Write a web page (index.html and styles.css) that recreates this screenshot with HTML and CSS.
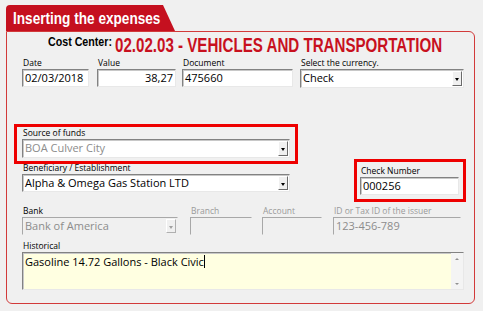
FILE: index.html
```html
<!DOCTYPE html>
<html lang="en">
<head>
    <meta charset="UTF-8">
    <title>Inserting the expenses</title>
    <link rel="stylesheet" href="styles.css">
</head>
<body>
    <div class="frame">
        <div class="tab"><span class="tab-text">Inserting the expenses</span></div>
        <div class="panel">
            <div class="costline">
                <span class="cc-label">Cost Center:</span>
                <span class="cc-value">02.02.03 - VEHICLES AND TRANSPORTATION</span>
            </div>

            <div class="row row-a">
                <div class="field f-date">
                    <label>Date</label>
                    <div class="box">02/03/2018</div>
                </div>
                <div class="field f-value">
                    <label>Value</label>
                    <div class="box right">38,27</div>
                </div>
                <div class="field f-doc">
                    <label>Document</label>
                    <div class="box">475660</div>
                </div>
                <div class="field f-cur">
                    <label>Select the currency.</label>
                    <div class="box combo">Check<span class="drop"></span></div>
                </div>
            </div>

            <div class="row row-b">
                <div class="field f-wide">
                    <label>Source of funds</label>
                    <div class="box combo muted">BOA Culver City<span class="drop"></span></div>
                </div>
            </div>

            <div class="row row-c">
                <div class="field f-wide">
                    <label>Beneficiary / Establishment</label>
                    <div class="box combo">Alpha &amp; Omega Gas Station LTD<span class="drop"></span></div>
                </div>
                <div class="field f-check">
                    <label>Check Number</label>
                    <div class="box">000256</div>
                </div>
            </div>

            <div class="row row-d">
                <div class="field f-bank">
                    <label>Bank</label>
                    <div class="box combo disabled muted">Bank of America<span class="drop off"></span></div>
                </div>
                <div class="field f-branch">
                    <label class="dim">Branch</label>
                    <div class="box disabled"></div>
                </div>
                <div class="field f-account">
                    <label class="dim">Account</label>
                    <div class="box disabled"></div>
                </div>
                <div class="field f-id">
                    <label class="dim">ID or Tax ID of the issuer</label>
                    <div class="box disabled muted">123-456-789</div>
                </div>
            </div>

            <div class="row row-e">
                <div class="field f-hist">
                    <label>Historical</label>
                    <div class="memo">
                        <div class="memo-text">Gasoline 14.72 Gallons - Black Civic<span class="caret"></span></div>
                        <div class="scroll">
                            <span class="arrow up"></span>
                            <span class="arrow down"></span>
                        </div>
                    </div>
                </div>
            </div>

            <div class="mark mark-source"></div>
            <div class="mark mark-check"></div>
        </div>
    </div>
</body>
</html>
```

FILE: styles.css
```css
body {
    margin: 0;
    background: #f0f0f0;
    font-family: 'Open Sans', 'Noto Sans', sans-serif;
    color: #000;
}
.frame {
    padding: 5px 0 0 6px;
}
.tab {
    width: 169px;
    height: 26px;
    box-sizing: border-box;
    padding: 4px 0 0 7px;
    background: #c5101f;
    color: #fff;
    font-family: 'Liberation Sans', Arial, sans-serif;
    font-weight: bold;
    font-size: 17px;
    line-height: 20px;
    white-space: nowrap;
    border-radius: 4px 0 0 0;
    clip-path: polygon(0 0, 157px 0, 169px 100%, 0 100%);
}
.tab-text {
    display: inline-block;
    transform: scaleX(0.8);
    transform-origin: left;
}
.panel {
    position: relative;
    width: 469px;
    height: 273px;
    box-sizing: border-box;
    border: 1px solid #d23a3a;
    border-radius: 0 6px 6px 6px;
    padding: 0 0 0 15px;
}
.costline {
    height: 20px;
    margin-top: 2px;
    padding-left: 26px;
    display: flex;
    align-items: flex-start;
    font-family: 'Liberation Sans', Arial, sans-serif;
    white-space: nowrap;
}
.cc-label {
    display: inline-block;
    font-size: 13px;
    font-weight: bold;
    line-height: 15px;
    transform: scaleX(0.82);
    transform-origin: left;
    margin-right: -11px;
}
.cc-value {
    display: inline-block;
    font-size: 19.5px;
    font-weight: bold;
    line-height: 22px;
    color: #c8101e;
    transform: scaleX(0.775);
    transform-origin: left;
}
.row {
    display: flex;
    align-items: flex-start;
}
.field label {
    display: block;
    font-size: 8.5px;
    line-height: 12px;
    height: 12px;
    padding-left: 1px;
    white-space: nowrap;
}
.field label.dim {
    color: #9a9a9a;
}
.box {
    position: relative;
    height: 18px;
    box-sizing: border-box;
    background: #fff;
    border: 1px solid;
    border-color: #828282 #e8e8e8 #e8e8e8 #828282;
    box-shadow: inset 1px 1px 0 #c8c8c8;
    font-size: 11px;
    line-height: 16px;
    padding: 0 2px;
    white-space: nowrap;
    overflow: hidden;
}
.box.right {
    text-align: right;
}
.box.muted {
    color: #8c8c8c;
}
.box.disabled {
    background: #f0f0f0;
    border-color: #a8a8a8 #f0f0f0 #f0f0f0 #a8a8a8;
    box-shadow: none;
}
.combo {
    padding-right: 14px;
}
.drop {
    position: absolute;
    right: 1px;
    top: 1px;
    bottom: 1px;
    width: 10px;
    background: #f0f0f0;
    border: 1px solid;
    border-color: #fff #6a6a6a #6a6a6a #fff;
    box-sizing: border-box;
}
.drop::after {
    content: '';
    position: absolute;
    left: 2px;
    top: 6px;
    border-left: 2.5px solid transparent;
    border-right: 2.5px solid transparent;
    border-top: 3px solid #000;
}
.drop.off {
    border-color: #fff #b0b0b0 #b0b0b0 #fff;
}
.drop.off::after {
    border-top-color: #a0a0a0;
}

.row-a {
    margin-top: 3px;
}
.f-date { width: 67px; }
.f-value { width: 79px; margin-left: 8px; }
.f-doc { width: 111px; margin-left: 6px; }
.f-cur { width: 164px; margin-left: 7px; }
.f-cur .box { height: 19px; }

.row-b {
    margin-top: 39px;
}
.f-wide { width: 268px; }
.row-b .box { height: 19px; }

.row-c {
    margin-top: 4px;
}
.f-check {
    width: 99px;
    margin-left: 70px;
    margin-top: 3px;
}

.row-d {
    margin-top: 10px;
}
.f-bank { width: 156px; }
.f-branch { width: 62px; margin-left: 12px; }
.f-account { width: 60px; margin-left: 10px; }
.f-id { width: 128px; margin-left: 11px; }

.row-e {
    margin-top: 5px;
}
.f-hist { width: 442px; }
.memo {
    display: flex;
    height: 38px;
    box-sizing: border-box;
    background: #ffffe1;
    border: 1px solid;
    border-color: #828282 #e8e8e8 #e8e8e8 #828282;
    box-shadow: inset 1px 1px 0 #c8c8c8;
}
.memo-text {
    flex: 1;
    font-size: 11px;
    line-height: 16px;
    padding: 1px 2px;
    white-space: nowrap;
}
.caret {
    display: inline-block;
    width: 1px;
    height: 13px;
    background: #000;
    vertical-align: -2px;
}
.scroll {
    width: 12px;
    background: #f4f4f4;
    display: flex;
    flex-direction: column;
    justify-content: space-between;
    align-items: center;
    padding: 5px 0 4px;
}
.arrow {
    border-left: 2px solid transparent;
    border-right: 2px solid transparent;
}
.arrow.up {
    border-bottom: 2px solid #909090;
}
.arrow.down {
    border-top: 2px solid #909090;
}

.mark {
    position: absolute;
    border: 3px solid #ee0000;
    box-sizing: border-box;
}
.mark-source {
    left: 7px;
    top: 92px;
    width: 284px;
    height: 40px;
}
.mark-check {
    left: 347px;
    top: 127px;
    width: 112px;
    height: 43px;
}
```
